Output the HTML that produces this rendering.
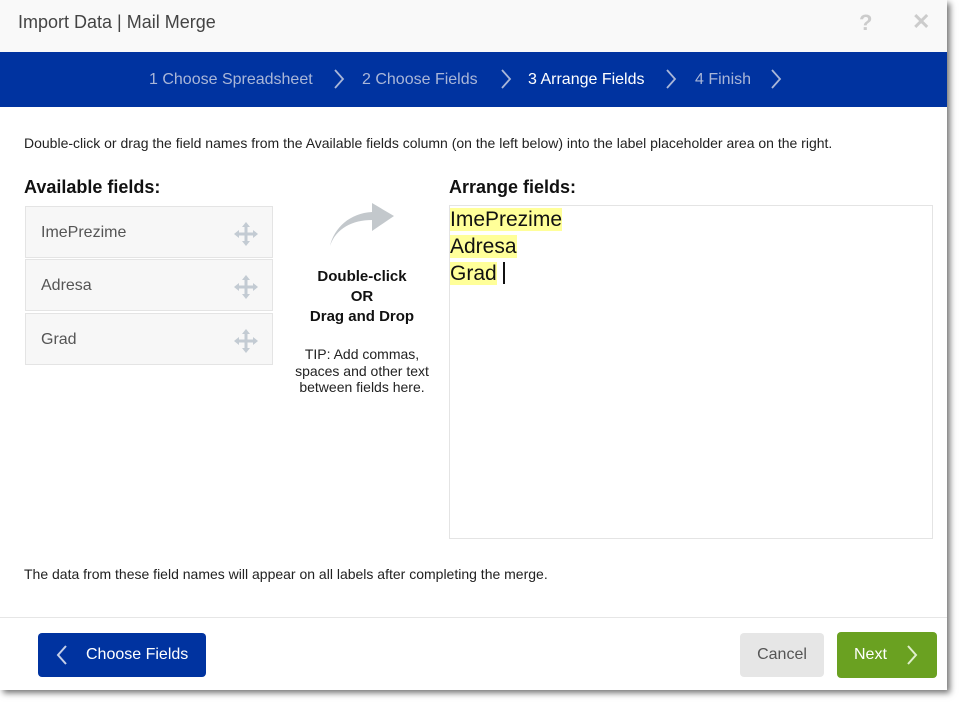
<!DOCTYPE html>
<html><head><style>
body{margin:0;width:961px;height:705px;background:#fff;font-family:"Liberation Sans",sans-serif;position:relative;overflow:hidden}
.dlg{position:absolute;left:0;top:0;width:947px;height:690px;background:#fff;box-shadow:3px 3px 6px rgba(0,0,0,.55)}
.hdr{position:absolute;left:0;top:0;width:947px;height:52px;background:#f9f9f9}
.title{position:absolute;left:18px;top:12px;font-size:18px;color:#444}
.band{position:absolute;left:0;top:52px;width:947px;height:55px;background:#0033a0}
.s{position:absolute;top:71px;font-size:16px;color:#a9b6d8}
.chev{position:absolute;top:68px}
.abs{position:absolute}
.row{position:absolute;left:25px;width:248px;height:52px;background:#f7f7f7;border:1px solid #e4e4e4;box-sizing:border-box}
.row span{position:absolute;left:15px;top:17px;font-size:16px;color:#555}
.row svg{position:absolute;left:205px;top:12px}
.hl{background:#ffff99;font-size:21px;color:#111;line-height:27px}
</style></head><body>
<div class="dlg">
<div class="hdr"></div>
<div class="title">Import Data | Mail Merge</div>
<div class="abs" style="left:859px;top:10px;font-size:22px;color:#ccc;font-weight:bold">?</div>
<div class="abs" style="left:912px;top:9px;font-size:22px;color:#ccc;font-weight:bold">✕</div>
<div class="band"></div>
<div class="s" style="left:149px">1 Choose Spreadsheet</div>
<div class="s" style="left:362px">2 Choose Fields</div>
<div class="s" style="left:528px;color:#fff">3 Arrange Fields</div>
<div class="s" style="left:695px">4 Finish</div>
<svg class="chev" style="left:333px" width="12" height="22"><path d="M2 2 L10 11 L2 20" fill="none" stroke="#a9b6d8" stroke-width="1.8"/></svg>
<svg class="chev" style="left:500px" width="12" height="22"><path d="M2 2 L10 11 L2 20" fill="none" stroke="#a9b6d8" stroke-width="1.8"/></svg>
<svg class="chev" style="left:665px" width="12" height="22"><path d="M2 2 L10 11 L2 20" fill="none" stroke="#a9b6d8" stroke-width="1.8"/></svg>
<svg class="chev" style="left:770px" width="12" height="22"><path d="M2 2 L10 11 L2 20" fill="none" stroke="#a9b6d8" stroke-width="1.8"/></svg>
<div class="abs" style="left:24px;top:135px;font-size:14px;color:#222">Double-click or drag the field names from the Available fields column (on the left below) into the label placeholder area on the right.</div>
<div class="abs" style="left:24px;top:177px;font-size:18px;font-weight:bold;color:#111">Available fields:</div>
<div class="abs" style="left:449px;top:177px;font-size:18px;font-weight:bold;color:#111">Arrange fields:</div>
<div class="row" style="top:206px"><span>ImePrezime</span><svg width="30" height="30" viewBox="0 0 30 30"><path d="M15 3 L19 8 H16.5 V13.5 H22 V11 L27 15 L22 19 V16.5 H16.5 V22 H19 L15 27 L11 22 H13.5 V16.5 H8 V19 L3 15 L8 11 V13.5 H13.5 V8 H11 Z" fill="#c3cbd3"/></svg></div>
<div class="row" style="top:259px"><span>Adresa</span><svg width="30" height="30" viewBox="0 0 30 30"><path d="M15 3 L19 8 H16.5 V13.5 H22 V11 L27 15 L22 19 V16.5 H16.5 V22 H19 L15 27 L11 22 H13.5 V16.5 H8 V19 L3 15 L8 11 V13.5 H13.5 V8 H11 Z" fill="#c3cbd3"/></svg></div>
<div class="row" style="top:313px"><span>Grad</span><svg width="30" height="30" viewBox="0 0 30 30"><path d="M15 3 L19 8 H16.5 V13.5 H22 V11 L27 15 L22 19 V16.5 H16.5 V22 H19 L15 27 L11 22 H13.5 V16.5 H8 V19 L3 15 L8 11 V13.5 H13.5 V8 H11 Z" fill="#c3cbd3"/></svg></div>
<svg class="abs" style="left:328px;top:203px" width="68" height="45" viewBox="0 0 68 45"><path d="M2 43 C8 25 25 17 44 17 V28 L66 13 L44 0 V9 C22 10 6 25 2 43 Z" fill="#c3c8cc"/></svg>
<div class="abs" style="left:282px;top:267px;width:160px;text-align:center;font-size:15px;font-weight:bold;color:#111;line-height:20px">Double-click<br>OR<br>Drag and Drop</div>
<div class="abs" style="left:282px;top:346px;width:160px;text-align:center;font-size:14px;color:#222;line-height:16.5px">TIP: Add commas,<br>spaces and other text<br>between fields here.</div>
<div class="abs" style="left:449px;top:205px;width:482px;height:332px;border:1px solid #e4e4e4"></div>
<div class="abs" style="left:450px;top:206px"><span class="hl">ImePrezime</span><br><span class="hl">Adresa</span><br><span class="hl">Grad</span><span style="display:inline-block;width:2px;height:22px;background:#111;margin-left:6px;vertical-align:-4px"></span></div>
<div class="abs" style="left:24px;top:566px;font-size:14px;color:#222">The data from these field names will appear on all labels after completing the merge.</div>
<div class="abs" style="left:0;top:617px;width:947px;height:1px;background:#e6e6e6"></div>
<div class="abs" style="left:38px;top:633px;width:168px;height:44px;background:#0033a0;border-radius:4px"></div>
<svg class="abs" style="left:56px;top:644px" width="12" height="22"><path d="M10 2 L2 11 L10 20" fill="none" stroke="#c5cfe8" stroke-width="2"/></svg>
<div class="abs" style="left:86px;top:646px;font-size:16px;color:#fff">Choose Fields</div>
<div class="abs" style="left:740px;top:633px;width:84px;height:44px;background:#e6e6e6;border-radius:4px;text-align:center;line-height:44px;font-size:16px;color:#555">Cancel</div>
<div class="abs" style="left:837px;top:632px;width:100px;height:46px;background:#6aa121;border-radius:4px"></div>
<div class="abs" style="left:854px;top:646px;font-size:16px;color:#fff">Next</div>
<svg class="abs" style="left:906px;top:644px" width="12" height="22"><path d="M2 2 L10 11 L2 20" fill="none" stroke="#e0efcc" stroke-width="2"/></svg>
</div>
</body></html>
